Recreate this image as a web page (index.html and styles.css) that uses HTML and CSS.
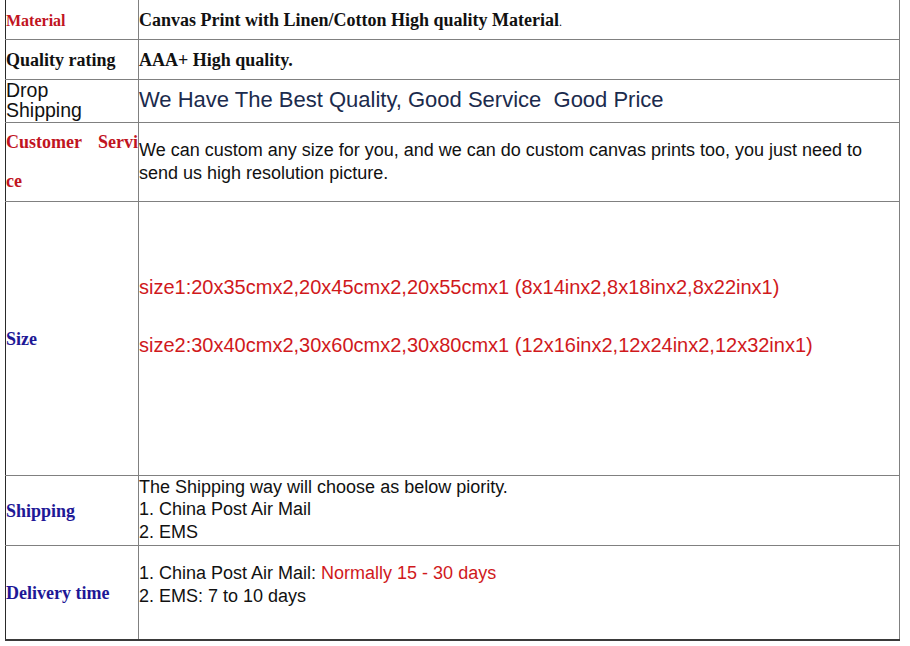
FILE: index.html
```html
<!DOCTYPE html>
<html>
<head>
<meta charset="utf-8">
<link rel="stylesheet" href="styles.css">
</head>
<body>
<table class="spec">
  <colgroup><col class="c-label"><col class="c-value"></colgroup>
  <tr class="r1">
    <td class="label serif red small">Material</td>
    <td class="value serif bold18">Canvas Print with Linen/Cotton High quality Material<span class="dot">.</span></td>
  </tr>
  <tr class="r2">
    <td class="label serif">Quality rating</td>
    <td class="value serif bold18">AAA+ High quality.</td>
  </tr>
  <tr class="r3">
    <td class="label sans drop">Drop<br>Shipping</td>
    <td class="value sans navy big">We Have The Best Quality, Good Service&nbsp; Good Price</td>
  </tr>
  <tr class="r4">
    <td class="label serif red service"><span class="svc-line">Customer Servi</span><span class="svc-rest">ce</span></td>
    <td class="value sans text18 wide">We can custom any size for you, and we can do custom canvas prints too, you just need to send us high resolution picture.</td>
  </tr>
  <tr class="r5">
    <td class="label serif blue">Size</td>
    <td class="value sans sizes">
      <p class="size-line">size1:20x35cmx2,20x45cmx2,20x55cmx1 (8x14inx2,8x18inx2,8x22inx1)</p>
      <p class="size-line">size2:30x40cmx2,30x60cmx2,30x80cmx1 (12x16inx2,12x24inx2,12x32inx1)</p>
    </td>
  </tr>
  <tr class="r6">
    <td class="label serif blue">Shipping</td>
    <td class="value sans text18 top">The Shipping way will choose as below piority.<br>1. China Post Air Mail<br>2. EMS</td>
  </tr>
  <tr class="r7">
    <td class="label serif blue">Delivery time</td>
    <td class="value sans text18 delivery">1. China Post Air Mail: <span class="redtext">Normally 15 - 30 days</span><br>2. EMS: 7 to 10 days</td>
  </tr>
</table>
</body>
</html>
```

FILE: styles.css
```css
html, body {
  margin: 0;
  padding: 0;
  background: #ffffff;
}

body {
  padding-left: 5px;
}

.spec {
  border-collapse: collapse;
  table-layout: fixed;
  width: 895px;
  border-left: 1px solid #2a2a2a;
  border-right: 1px solid #808080;
  border-bottom: 2px solid #3a3a3a;
}

.c-label { width: 133px; }

.spec td {
  padding: 0;
  border-top: 1px solid #808080;
  border-right: 1px solid #808080;
  vertical-align: middle;
  color: #111;
}

.spec tr.r1 td { border-top: none; }

.r1 { height: 39px; }
.r2 { height: 40px; }
.r3 { height: 43px; }
.r4 { height: 79px; }
.r5 { height: 274px; }
.r6 { height: 70px; }
.r7 { height: 95px; }

.serif { font-family: "Liberation Serif", "Times New Roman", serif; }
.sans { font-family: "Liberation Sans", Arial, sans-serif; }

.spec td.label.serif {
  font-weight: bold;
  font-size: 18px;
  line-height: 22px;
  padding-top: 2px;
}

.spec td.label.small {
  font-size: 16px;
  padding-top: 4px;
}

.spec td.red { color: #c1141f; }
.spec td.blue { color: #1e1896; }

.spec td.drop {
  font-size: 19.5px;
  line-height: 20px;
  padding-bottom: 2px;
  color: #111;
}

.spec td.label.service {
  line-height: 39px;
  padding-top: 0;
}

.svc-line {
  display: block;
  text-align: justify;
  text-align-last: justify;
}

.svc-rest {
  display: block;
}

.spec td.bold18 {
  font-weight: bold;
  font-size: 18px;
  padding-top: 2px;
}

.dot {
  font-weight: normal;
  font-size: 12px;
}

.spec td.navy { color: #1b2b4d; }

.spec td.big {
  font-size: 22px;
  padding-bottom: 2px;
}

.text18 {
  font-size: 18px;
  line-height: 22.5px;
}

.spec td.wide {
  line-height: 23px;
}

.spec td.sizes {
  vertical-align: top;
  padding-top: 73px;
}

.size-line {
  margin: 0 0 34px 0;
  font-size: 20px;
  line-height: 24px;
  color: #d0191c;
}

.spec td.top {
  vertical-align: top;
}

.spec td.delivery {
  vertical-align: top;
  padding-top: 16px;
  line-height: 23px;
}

.redtext { color: #d0191c; }
```
